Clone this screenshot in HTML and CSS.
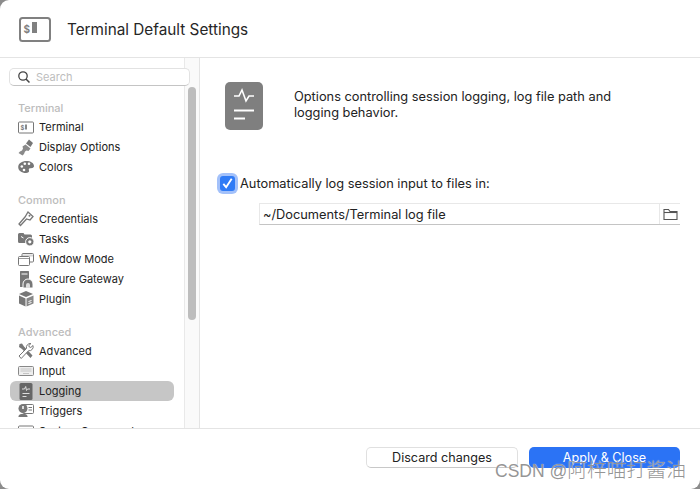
FILE: index.html
```html
<!DOCTYPE html>
<html lang="en">
<head>
    <meta charset="UTF-8">
    <title>Terminal Default Settings</title>
    <link rel="stylesheet" href="styles.css">
</head>
<body>
    <div class="window">
        <header class="title-bar">
            <svg class="title-icon" width="33" height="26" viewBox="0 0 33 26">
                <rect x="1" y="1" width="30" height="23" rx="2.500" fill="none" stroke="#808080" stroke-width="2"/>
                <text x="4.500" y="15.500" class="dollar">$</text>
                <rect x="13" y="5" width="5" height="11" fill="#808080"/>
            </svg>
            <h1>Terminal Default Settings</h1>
        </header>

        <div class="main">
            <aside class="sidebar">
                <div class="nav">
                    <div class="search">
                        <svg width="14" height="14" viewBox="0 0 14 14">
                            <circle cx="6" cy="6" r="4.200" fill="none" stroke="#444" stroke-width="1.300"/>
                            <path d="M9 9l3.500 3.500" stroke="#444" stroke-width="1.500" fill="none"/>
                        </svg>
                        <span>Search</span>
                    </div>

                    <div class="group-label first">Terminal</div>
                    <div class="item">
                        <svg width="16" height="13" viewBox="0 0 16 13"><rect x=".5" y="1" width="15" height="11" rx="1" fill="#fff" stroke="#777"/><text x="2.500" y="8.500" class="dollar-sm">$</text><rect x="7" y="3.500" width="2" height="5" fill="#888"/></svg>
                        Terminal
                    </div>
                    <div class="item">
                        <svg width="16" height="17" viewBox="0 0 16 17"><path d="M11 .5l4 3.500-2.500 4-4.500-3.500z" fill="#777"/><path d="M7.500 5.500l5 4-2 2.500-2-.5-1.500 1-1 2.500-1.500 1.500-4-2.500 1.500-1.500 2-1 1-2-.5-2z" fill="#8a8a8a"/></svg>
                        Display Options
                    </div>
                    <div class="item">
                        <svg width="16" height="14" viewBox="0 0 16 14"><path d="M8.500 1c4 0 7.500 2 7.500 5 0 2-2.500 2.300-4 2.300-1.200 0-1.500 1.200-1 2.200.5 1.500-1 2.500-3 2.500C3.500 13 .2 10.500.2 7 .2 3.500 4 1 8.500 1z" fill="#777"/><circle cx="3.800" cy="6.500" r="1.300" fill="#fff"/><circle cx="6.800" cy="3.800" r="1.300" fill="#fff"/><circle cx="11" cy="3.800" r="1.300" fill="#fff"/><circle cx="6" cy="10" r="1.300" fill="#fff"/></svg>
                        Colors
                    </div>

                    <div class="group-label">Common</div>
                    <div class="item">
                        <svg width="16" height="16" viewBox="0 0 16 16"><path d="M10 1l5 4.500-3 3.500-3.500-1L2.500 14.500 1 13l6-7z" fill="#fff" stroke="#777" stroke-width="1.300"/><circle cx="11.500" cy="4.800" r="1" fill="#777"/></svg>
                        Credentials
                    </div>
                    <div class="item">
                        <svg width="16" height="14" viewBox="0 0 16 14"><path d="M0 2.500A1.500 1.500 0 0 1 1.500 1h4l1 1.500h6A1.500 1.500 0 0 1 14 4v7H1.500A1.500 1.500 0 0 1 0 9.500z" fill="#777"/><circle cx="11.800" cy="9.800" r="4.200" fill="#777" stroke="#fff"/><circle cx="11.800" cy="9.800" r="1.600" fill="#fff"/><path d="M3 4.500l2.500 1.500" stroke="#fff"/></svg>
                        Tasks
                    </div>
                    <div class="item">
                        <svg width="16" height="13" viewBox="0 0 16 13"><rect x="4" y=".5" width="11.500" height="8.500" rx="1" fill="#fff" stroke="#777"/><path d="M4.500 2.500h10.500" stroke="#aaa" stroke-width="2" stroke-dasharray="1 1"/><rect x=".5" y="3.500" width="11" height="9" rx="1" fill="#fff" stroke="#777"/><path d="M1 5.500h10" stroke="#999"/></svg>
                        Window Mode
                    </div>
                    <div class="item">
                        <svg width="16" height="17" viewBox="0 0 16 17"><rect x="2" y="0" width="9" height="16" rx=".5" fill="#777"/><path d="M3.500 3h6" stroke="#fff"/><path d="M5 17v-4a5 5 0 0 1 10 0v4z" fill="#777" stroke="#fff"/><path d="M8 17v-3a2 2 0 0 1 4 0v3z" fill="#ddd"/></svg>
                        Secure Gateway
                    </div>
                    <div class="item">
                        <svg width="16" height="16" viewBox="0 0 16 16"><path d="M8 0l7 3-7 3-7-3z" fill="#777"/><path d="M1 4.500l6.500 3V15.500L1 12.500z" fill="#777"/><path d="M15.500 4.500L8.500 7.500V15.500l7-3z" fill="#888"/><path d="M10.500 10.500l3-1M10.500 12.500l3-1" stroke="#fff"/></svg>
                        Plugin
                    </div>

                    <div class="group-label">Advanced</div>
                    <div class="item">
                        <svg width="16" height="16" viewBox="0 0 16 16"><path d="M1.500 1L4 .5l2 3L14.500 12.500 12.500 15 4 6 1 4z" fill="#777"/><path d="M15 2.500l-2.200 2-1.500-.5-.5-1.500L13 .5A4 4 0 0 0 8.500 5.500L1 13l2.200 2.500 7.300-7.800A4 4 0 0 0 15 2.500z" fill="#fff" stroke="#777"/></svg>
                        Advanced
                    </div>
                    <div class="item">
                        <svg width="16" height="10" viewBox="0 0 16 10"><rect x=".5" y=".5" width="15" height="9" rx="1" fill="#eee" stroke="#888"/><path d="M2.500 3h11M2.500 5h11M5 7.500h6" stroke="#c4c4c4"/></svg>
                        Input
                    </div>
                    <div class="item active">
                        <svg width="16" height="17" viewBox="0 0 16 17"><rect x="1.500" width="13" height="17" rx="1.500" fill="#666"/><path d="M4 6h2.500l1.200-2.500.8 4 1-1.500H12M4.500 10.500h7M4.500 13.500h4" stroke="#ddd" fill="none"/></svg>
                        Logging
                    </div>
                    <div class="item">
                        <svg width="16" height="15" viewBox="0 0 16 15"><rect x="5" y=".5" width="10.500" height="9" rx="1" fill="#fff" stroke="#777"/><circle cx="5" cy="4.500" r="4.500" fill="#777"/><path d="M5 2v3" stroke="#fff" stroke-width="1.500"/><path d="M.5 12c1-3 8-3 9 0v1H.5z" fill="#777"/><path d="M10.500 3.500h3.500M10.500 6h3.500" stroke="#777"/></svg>
                        Triggers
                    </div>
                    <div class="item">
                        <svg width="16" height="13" viewBox="0 0 16 13"><rect x=".5" y="1" width="15" height="11" rx="1" fill="none" stroke="#777"/></svg>
                        System Commands
                    </div>
                </div>
                <div class="scroll-track"><div class="scroll-thumb"></div></div>
            </aside>

            <section class="content">
                <div class="intro">
                    <svg width="38" height="48" viewBox="0 0 38 48">
                        <rect width="38" height="48" rx="5" fill="#7f7f7f"/>
                        <path d="M9 14h5l3-6 4 11 3-5h5" fill="none" stroke="#fff" stroke-width="1.600"/>
                        <path d="M9 28.500h20M9 36.500h11" stroke="#fff" stroke-width="2"/>
                    </svg>
                    <p>Options controlling session logging, log file path and logging behavior.</p>
                </div>

                <label class="check-row">
                    <span class="checkbox">
                        <svg width="13" height="13" viewBox="0 0 14 14"><path d="M2.500 7.500l3 3.500 6-9" fill="none" stroke="#fff" stroke-width="2"/></svg>
                    </span>
                    Automatically log session input to files in:
                </label>

                <div class="path-field">
                    <span class="path-text">~/Documents/Terminal log file</span>
                    <span class="path-btn">
                        <svg width="15" height="13" viewBox="0 0 15 13"><path d="M1 11.500V1.500h4.500l1.500 2h7v8z" fill="none" stroke="#555" stroke-width="1.100"/><path d="M1 4.500h13" stroke="#555" stroke-width="1.100"/></svg>
                    </span>
                </div>
            </section>
        </div>

        <footer class="actions">
            <button class="btn">Discard changes</button>
            <button class="btn primary">Apply &amp; Close</button>
        </footer>
        <div class="watermark">CSDN @<span class="watermark-cjk">阿梓喵打酱油</span></div>
    </div>
</body>
</html>
```
FILE: styles.css
```css
* {
    box-sizing: border-box;
}

html, body {
    margin: 0;
    padding: 0;
    background-color: #8c8c8c;
}

body {
    font-family: Inter, "Noto Sans CJK SC", sans-serif;
    color: #222;
    font-size: 11px;
}

.window {
    position: relative;
    width: 700px;
    height: 489px;
    display: flex;
    flex-direction: column;
    overflow: hidden;
    background-color: #fff;
    border-radius: 9px 0 9px 9px;
}

/* Title bar */
.title-bar {
    height: 58px;
    flex: none;
    display: flex;
    align-items: center;
    padding-left: 19px;
    border-bottom: 1px solid #e4e4e4;
}

.title-bar h1 {
    margin: 2px 0 0 15px;
    font-size: 15.300px;
    font-weight: 400;
    color: #262626;
}

.title-icon {
    margin-top: 3px;
}

.dollar {
    font-size: 10px;
    font-weight: 700;
    fill: #808080;
}

.dollar-sm {
    font-size: 6px;
    font-weight: 700;
    fill: #777;
}

.main {
    flex: 1;
    min-height: 0;
    display: flex;
}

/* Sidebar */
.sidebar {
    width: 200px;
    flex: none;
    display: flex;
    border-right: 1px solid #e4e4e4;
}

.nav {
    width: 185px;
    flex: none;
    padding: 10px 10px 0;
    overflow-x: visible;
    overflow-y: clip;
    border-right: 1px solid #e9e9e9;
}

/* the search box runs over the list's edge */
.search {
    position: relative;
    z-index: 1;
    width: 181px;
    height: 18px;
    margin-left: -1px;
    display: flex;
    align-items: center;
    gap: 5px;
    padding-left: 7px;
    background-color: #fff;
    border: 1px solid #e2e2e2;
    border-bottom-color: #c4c4c4;
    border-radius: 5px;
    color: #bdbdbd;
}

.group-label {
    margin: 15px 0 0 8px;
    height: 17px;
    line-height: 16px;
    font-weight: 500;
    color: #bcbcbc;
}

.group-label.first {
    margin-top: 14px;
}

.item {
    height: 20px;
    display: flex;
    align-items: center;
    gap: 5px;
    padding-left: 8px;
    border-radius: 6px;
    white-space: nowrap;
}

.item svg {
    flex: none;
}

.item.active {
    background-color: #c6c6c6;
}

.scroll-track {
    flex: 1;
    background-color: #fafafa;
    padding: 29px 3px 0;
}

.scroll-thumb {
    width: 8px;
    height: 233px;
    border-radius: 4px;
    background-color: #bdbdbd;
}

/* Right pane */
.content {
    flex: 1;
    padding: 24px 20px 0 20px;
}

.intro {
    display: flex;
    gap: 31px;
    padding-left: 5px;
}

.intro p {
    margin: 7px 0 0;
    width: 340px;
    font-size: 12.800px;
    line-height: 16px;
}

.check-row {
    display: flex;
    align-items: center;
    gap: 5px;
    margin-top: 46px;
    font-size: 12.800px;
}

.checkbox {
    width: 15px;
    height: 15px;
    display: flex;
    align-items: center;
    justify-content: center;
    background-color: #2f7bf6;
    border-radius: 3px;
    box-shadow: 0 0 0 3px #a3c1fa;
}

.path-field {
    display: flex;
    height: 22px;
    margin: 12px 0 0 39px;
    width: 421px;
    font-size: 12.800px;
    border: 1px solid #e8e8e8;
    border-bottom-color: #c4c4c4;
    border-right: none;
}

.path-text {
    flex: 1;
    padding-left: 3px;
    line-height: 21px;
}

.path-btn {
    width: 21px;
    display: flex;
    align-items: center;
    justify-content: center;
    border-left: 1px solid #e8e8e8;
}

/* Footer */
.actions {
    height: 61px;
    flex: none;
    display: flex;
    justify-content: flex-end;
    gap: 11px;
    padding: 18px 20px 0 0;
    border-top: 1px solid #e4e4e4;
}

.btn {
    width: 152px;
    height: 21px;
    padding: 0;
    font-family: inherit;
    font-size: 12.600px;
    color: #222;
    background-color: #fff;
    border: 1px solid #e0e0e0;
    border-bottom-color: #c8c8c8;
    border-radius: 5px;
}

.btn.primary {
    width: 151px;
    color: #fff;
    background-color: #2b73f5;
    border: none;
}

.watermark {
    position: absolute;
    left: 495px;
    top: 454px;
    font-family: "Liberation Sans", sans-serif;
    font-size: 17.500px;
    white-space: nowrap;
    color: rgba(130, 130, 130, .85);
    text-shadow: 0 0 1px #fff;
}

.watermark-cjk {
    font-family: "Noto Sans CJK SC", sans-serif;
    font-size: 19.800px;
    font-weight: 300;
}
```
